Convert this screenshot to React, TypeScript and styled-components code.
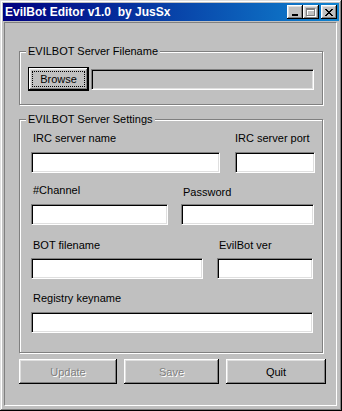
import React from 'react';
import styled, { createGlobalStyle } from 'styled-components';

const GlobalStyle = createGlobalStyle`
  body {
    margin: 0;
    background: #c0c0c0;
    font-family: 'Liberation Sans', Arial, sans-serif;
  }
`;

const Window = styled.div`
  width: 342px;
  height: 411px;
  box-sizing: border-box;
  padding: 3px;
  background: #c0c0c0;
  box-shadow: inset -1px -1px #000, inset 1px 1px #dfdfdf,
    inset -2px -2px #808080, inset 2px 2px #fff;
  display: flex;
  flex-direction: column;
`;

const TitleBar = styled.div`
  height: 18px;
  flex-shrink: 0;
  display: flex;
  align-items: center;
  padding: 0 2px;
  background: linear-gradient(90deg, #000080, #1084d0);
`;

const TitleText = styled.span`
  flex: 1;
  color: #fff;
  font: bold 12px 'Liberation Sans', Arial, sans-serif;
  white-space: pre;
  line-height: 18px;
`;

const CaptionButton = styled.div<{ gapLeft?: number }>`
  width: 16px;
  height: 14px;
  box-sizing: border-box;
  margin-left: ${({ gapLeft }) => gapLeft || 0}px;
  background: #c0c0c0;
  box-shadow: inset -1px -1px #000, inset 1px 1px #fff,
    inset -2px -2px #808080, inset 2px 2px #dfdfdf;
  display: flex;
  align-items: center;
  justify-content: center;
  svg {
    display: block;
  }
`;

const Client = styled.div`
  flex: 1;
  margin: 1px 2px 2px 1px;
  border-style: solid;
  border-width: 1px;
  border-color: #808080 #fff #fff #808080;
  padding: 22px 13px 0 14px;
  display: flex;
  flex-direction: column;
  font-size: 11px;
  color: #000;
`;

const Group = styled.fieldset<{ top?: number }>`
  margin: ${({ top }) => top || 0}px 0 0 0;
  padding: 0;
  min-width: 0;
  border: 1px solid #808080;
  box-shadow: inset 1px 1px #fff, 1px 1px #fff;
`;

const Legend = styled.legend`
  margin-left: 6px;
  padding: 0 2px;
  background: #c0c0c0;
  font-size: 11px;
  line-height: 13px;
`;

const FileRow = styled.div`
  display: flex;
  align-items: center;
  gap: 2px;
  padding: 9px 8px 13px 8px;
`;

const Button = styled.div<{ w: number; h: number; disabled?: boolean }>`
  width: ${({ w }) => w}px;
  height: ${({ h }) => h}px;
  box-sizing: border-box;
  flex-shrink: 0;
  background: #c0c0c0;
  box-shadow: inset -1px -1px #000, inset 1px 1px #fff,
    inset -2px -2px #808080, inset 2px 2px #dfdfdf;
  display: flex;
  align-items: center;
  justify-content: center;
  font-size: 11px;
  color: ${({ disabled }) => (disabled ? '#808080' : '#000')};
  text-shadow: ${({ disabled }) => (disabled ? '1px 1px 0 #fff' : 'none')};
`;

const DefaultButton = styled(Button)`
  border: 1px solid #000;
  padding: 3px;
`;

const FocusRect = styled.div`
  flex: 1;
  align-self: stretch;
  border: 1px dotted #000;
  display: flex;
  align-items: center;
  justify-content: center;
`;

const TextBox = styled.div<{ grow?: boolean; readOnly?: boolean }>`
  ${({ grow }) => (grow ? 'flex: 1 1 auto;' : '')}
  height: 21px;
  box-sizing: border-box;
  background: ${({ readOnly }) => (readOnly ? '#c0c0c0' : '#fff')};
  border-style: solid;
  border-width: 1px;
  border-color: #808080 #fff #fff #808080;
  box-shadow: inset 1px 1px #000, inset -1px -1px #dfdfdf;
`;

const Settings = styled.div`
  padding: 6px 0 19px 11px;
`;

const Row = styled.div<{ top?: number }>`
  display: flex;
  margin-top: ${({ top }) => top || 0}px;
`;

const Field = styled.div<{ w: number; left?: number }>`
  width: ${({ w }) => w}px;
  margin-left: ${({ left }) => left || 0}px;
  display: flex;
  flex-direction: column;
`;

const Label = styled.label<{ indent?: number; drop?: number; gap: number }>`
  line-height: 13px;
  padding-left: ${({ indent }) => (indent === undefined ? 2 : indent)}px;
  margin-top: ${({ drop }) => drop || 0}px;
  margin-bottom: ${({ gap }) => gap}px;
  white-space: nowrap;
`;

const ButtonRow = styled.div`
  display: flex;
  gap: 7px;
  margin-top: 6px;
`;

const MinIcon = () => (
  <svg width="8" height="7" viewBox="0 0 8 7" shapeRendering="crispEdges">
    <rect x="1" y="5" width="6" height="2" fill="#000" />
  </svg>
);

const MaxIcon = () => (
  <svg width="10" height="9" viewBox="0 0 10 9" shapeRendering="crispEdges">
    <g fill="none" stroke="#fff">
      <rect x="1.5" y="1.5" width="8" height="7" />
      <line x1="1" y1="2.5" x2="10" y2="2.5" />
    </g>
    <g fill="none" stroke="#808080">
      <rect x="0.5" y="0.5" width="8" height="7" />
      <line x1="0" y1="1.5" x2="9" y2="1.5" />
    </g>
  </svg>
);

const CloseIcon = () => (
  <svg width="8" height="7" viewBox="0 0 8 7" shapeRendering="crispEdges">
    <path
      d="M0 0h2v1h1v1h2v-1h1v-1h2v1h-1v1h-1v1h-1v1h1v1h1v1h1v1h-2v-1h-1v-1h-2v1h-1v1h-2v-1h1v-1h1v-1h1v-1h-1v-1h-1v-1h-1z"
      fill="#000"
    />
  </svg>
);

const App = () => {
  return (
    <>
      <GlobalStyle />
      <Window>
        <TitleBar>
          <TitleText>EvilBot Editor v1.0  by JusSx</TitleText>
          <CaptionButton>
            <MinIcon />
          </CaptionButton>
          <CaptionButton>
            <MaxIcon />
          </CaptionButton>
          <CaptionButton gapLeft={2}>
            <CloseIcon />
          </CaptionButton>
        </TitleBar>
        <Client>
          <Group>
            <Legend>EVILBOT Server Filename</Legend>
            <FileRow>
              <DefaultButton w={61} h={24}>
                <FocusRect>Browse</FocusRect>
              </DefaultButton>
              <TextBox grow readOnly />
            </FileRow>
          </Group>
          <Group top={8}>
            <Legend>EVILBOT Server Settings</Legend>
            <Settings>
              <Row>
                <Field w={189}>
                  <Label gap={7}>IRC server name</Label>
                  <TextBox />
                </Field>
                <Field w={80} left={15}>
                  <Label gap={7} indent={0}>
                    IRC server port
                  </Label>
                  <TextBox />
                </Field>
              </Row>
              <Row top={11}>
                <Field w={137}>
                  <Label gap={7}>#Channel</Label>
                  <TextBox />
                </Field>
                <Field w={133} left={13}>
                  <Label gap={5} drop={2}>
                    Password
                  </Label>
                  <TextBox />
                </Field>
              </Row>
              <Row top={14}>
                <Field w={172}>
                  <Label gap={6}>BOT filename</Label>
                  <TextBox />
                </Field>
                <Field w={96} left={14}>
                  <Label gap={6}>EvilBot ver</Label>
                  <TextBox />
                </Field>
              </Row>
              <Row top={13}>
                <Field w={282}>
                  <Label gap={7}>Registry keyname</Label>
                  <TextBox />
                </Field>
              </Row>
            </Settings>
          </Group>
          <ButtonRow>
            <Button w={98} h={25} disabled>
              Update
            </Button>
            <Button w={95} h={25} disabled>
              Save
            </Button>
            <Button w={100} h={25}>
              Quit
            </Button>
          </ButtonRow>
        </Client>
      </Window>
    </>
  );
};

export default App;
